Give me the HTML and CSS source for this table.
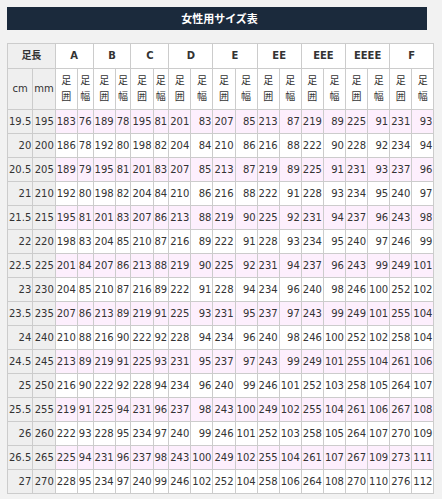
FILE: index.html
```html
<!DOCTYPE html>
<html lang="ja">
<head>
<meta charset="utf-8">
<title>女性用サイズ表</title>
<link rel="stylesheet" href="styles.css">
</head>
<body>
<div class="wrap">
  <div class="title">女性用サイズ表</div>
  <table class="size">
    <thead>
      <tr>
        <th class="gray" colspan="2">足長</th>
        <th colspan="2">A</th>
        <th colspan="2">B</th>
        <th colspan="2">C</th>
        <th colspan="2">D</th>
        <th colspan="2">E</th>
        <th colspan="2">EE</th>
        <th colspan="2">EEE</th>
        <th colspan="2">EEEE</th>
        <th colspan="2">F</th>
      </tr>
      <tr class="sub">
        <th class="gray unit">cm</th>
        <th class="gray unit">mm</th>
        <th>足囲</th><th>足幅</th>
        <th>足囲</th><th>足幅</th>
        <th>足囲</th><th>足幅</th>
        <th>足囲</th><th>足幅</th>
        <th>足囲</th><th>足幅</th>
        <th>足囲</th><th>足幅</th>
        <th>足囲</th><th>足幅</th>
        <th>足囲</th><th>足幅</th>
        <th>足囲</th><th>足幅</th>
      </tr>
    </thead>
    <tbody>
      <tr class="odd"><td class="gray">19.5</td><td class="gray">195</td><td>183</td><td>76</td><td>189</td><td>78</td><td>195</td><td>81</td><td>201</td><td>83</td><td>207</td><td>85</td><td>213</td><td>87</td><td>219</td><td>89</td><td>225</td><td>91</td><td>231</td><td>93</td></tr>
      <tr><td class="gray">20</td><td class="gray">200</td><td>186</td><td>78</td><td>192</td><td>80</td><td>198</td><td>82</td><td>204</td><td>84</td><td>210</td><td>86</td><td>216</td><td>88</td><td>222</td><td>90</td><td>228</td><td>92</td><td>234</td><td>94</td></tr>
      <tr class="odd"><td class="gray">20.5</td><td class="gray">205</td><td>189</td><td>79</td><td>195</td><td>81</td><td>201</td><td>83</td><td>207</td><td>85</td><td>213</td><td>87</td><td>219</td><td>89</td><td>225</td><td>91</td><td>231</td><td>93</td><td>237</td><td>96</td></tr>
      <tr><td class="gray">21</td><td class="gray">210</td><td>192</td><td>80</td><td>198</td><td>82</td><td>204</td><td>84</td><td>210</td><td>86</td><td>216</td><td>88</td><td>222</td><td>91</td><td>228</td><td>93</td><td>234</td><td>95</td><td>240</td><td>97</td></tr>
      <tr class="odd"><td class="gray">21.5</td><td class="gray">215</td><td>195</td><td>81</td><td>201</td><td>83</td><td>207</td><td>86</td><td>213</td><td>88</td><td>219</td><td>90</td><td>225</td><td>92</td><td>231</td><td>94</td><td>237</td><td>96</td><td>243</td><td>98</td></tr>
      <tr><td class="gray">22</td><td class="gray">220</td><td>198</td><td>83</td><td>204</td><td>85</td><td>210</td><td>87</td><td>216</td><td>89</td><td>222</td><td>91</td><td>228</td><td>93</td><td>234</td><td>95</td><td>240</td><td>97</td><td>246</td><td>99</td></tr>
      <tr class="odd"><td class="gray">22.5</td><td class="gray">225</td><td>201</td><td>84</td><td>207</td><td>86</td><td>213</td><td>88</td><td>219</td><td>90</td><td>225</td><td>92</td><td>231</td><td>94</td><td>237</td><td>96</td><td>243</td><td>99</td><td>249</td><td>101</td></tr>
      <tr><td class="gray">23</td><td class="gray">230</td><td>204</td><td>85</td><td>210</td><td>87</td><td>216</td><td>89</td><td>222</td><td>91</td><td>228</td><td>94</td><td>234</td><td>96</td><td>240</td><td>98</td><td>246</td><td>100</td><td>252</td><td>102</td></tr>
      <tr class="odd"><td class="gray">23.5</td><td class="gray">235</td><td>207</td><td>86</td><td>213</td><td>89</td><td>219</td><td>91</td><td>225</td><td>93</td><td>231</td><td>95</td><td>237</td><td>97</td><td>243</td><td>99</td><td>249</td><td>101</td><td>255</td><td>104</td></tr>
      <tr><td class="gray">24</td><td class="gray">240</td><td>210</td><td>88</td><td>216</td><td>90</td><td>222</td><td>92</td><td>228</td><td>94</td><td>234</td><td>96</td><td>240</td><td>98</td><td>246</td><td>100</td><td>252</td><td>102</td><td>258</td><td>104</td></tr>
      <tr class="odd"><td class="gray">24.5</td><td class="gray">245</td><td>213</td><td>89</td><td>219</td><td>91</td><td>225</td><td>93</td><td>231</td><td>95</td><td>237</td><td>97</td><td>243</td><td>99</td><td>249</td><td>101</td><td>255</td><td>104</td><td>261</td><td>106</td></tr>
      <tr><td class="gray">25</td><td class="gray">250</td><td>216</td><td>90</td><td>222</td><td>92</td><td>228</td><td>94</td><td>234</td><td>96</td><td>240</td><td>99</td><td>246</td><td>101</td><td>252</td><td>103</td><td>258</td><td>105</td><td>264</td><td>107</td></tr>
      <tr class="odd"><td class="gray">25.5</td><td class="gray">255</td><td>219</td><td>91</td><td>225</td><td>94</td><td>231</td><td>96</td><td>237</td><td>98</td><td>243</td><td>100</td><td>249</td><td>102</td><td>255</td><td>104</td><td>261</td><td>106</td><td>267</td><td>108</td></tr>
      <tr><td class="gray">26</td><td class="gray">260</td><td>222</td><td>93</td><td>228</td><td>95</td><td>234</td><td>97</td><td>240</td><td>99</td><td>246</td><td>101</td><td>252</td><td>103</td><td>258</td><td>105</td><td>264</td><td>107</td><td>270</td><td>109</td></tr>
      <tr class="odd"><td class="gray">26.5</td><td class="gray">265</td><td>225</td><td>94</td><td>231</td><td>96</td><td>237</td><td>98</td><td>243</td><td>100</td><td>249</td><td>102</td><td>255</td><td>104</td><td>261</td><td>107</td><td>267</td><td>109</td><td>273</td><td>111</td></tr>
      <tr><td class="gray">27</td><td class="gray">270</td><td>228</td><td>95</td><td>234</td><td>97</td><td>240</td><td>99</td><td>246</td><td>102</td><td>252</td><td>104</td><td>258</td><td>106</td><td>264</td><td>108</td><td>270</td><td>110</td><td>276</td><td>112</td></tr>
    </tbody>
  </table>
</div>
</body>
</html>
```
FILE: styles.css
```css
html, body {
  margin: 0;
  padding: 0;
  background: #f2f2f2;
}
body {
  padding: 7px;
  font-family: "DejaVu Sans", "Noto Sans CJK JP", sans-serif;
  font-size: 10px;
  color: #333;
}
.wrap {
  width: 420px;
}
.title {
  background: #1b2a3c;
  color: #fff;
  font-family: "Noto Sans CJK JP", sans-serif;
  font-weight: bold;
  font-size: 11px;
  height: 23px;
  line-height: 23px;
  text-align: center;
  padding-left: 5px;
  margin-bottom: 13px;
}
.size {
  border-collapse: collapse;
  width: 427px;
  background: #fff;
}
.size th,
.size td {
  border: 1px solid #cccccc;
}
.size th {
  padding: 4px 1px;
  line-height: 16px;
  font-weight: bold;
  text-align: center;
  background: #fff;
}
.size .sub th {
  font-weight: normal;
}
.size td {
  padding: 5.5px 1px;
  line-height: 12px;
  text-align: right;
  white-space: nowrap;
}
.size tr.odd td {
  background: #fdeffd;
}
.size th.gray,
.size td.gray,
.size tr.odd td.gray {
  background: #efefef;
}
.size th.unit {
  padding: 4px 1px;
}
```
